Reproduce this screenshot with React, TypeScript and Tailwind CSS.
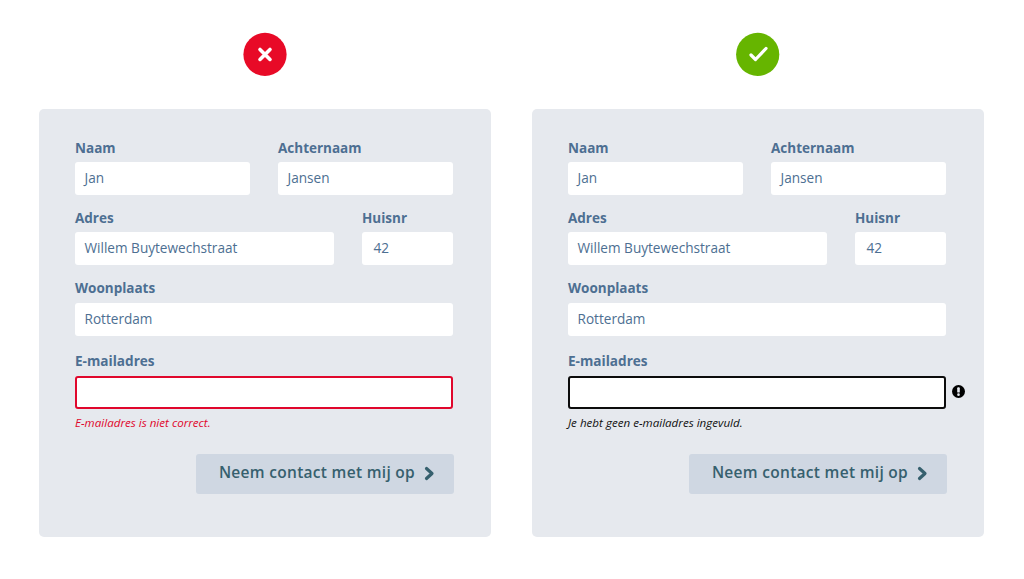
function Field({
  label,
  value,
  className,
  labelClass = "h-[23px]",
  inputClass = "px-[9.5px]",
}: {
  label: string;
  value: string;
  className: string;
  labelClass?: string;
  inputClass?: string;
}) {
  return (
    <label className={`flex flex-col ${className}`}>
      <span className={`text-[13.5px] leading-[19px] font-bold text-[#4d6f92] ${labelClass}`}>{label}</span>
      <span className={`flex h-[33px] items-center rounded-[3px] bg-white text-[13.6px] text-[#4d6f92] ${inputClass}`}>
        {value}
      </span>
    </label>
  );
}

function Panel({ kind }: { kind: "error" | "ok" }) {
  const isError = kind === "error";
  return (
    <section className="flex w-[452px] flex-col items-center">
      {isError ? (
        <svg className="mt-[32px]" width="44" height="44" viewBox="0 0 44 44" fill="none">
          <circle cx="22" cy="22.4" r="21.6" fill="#e80a27" />
          <path d="M17 17.4 27 27.4M27 17.4 17 27.4" stroke="#fff" strokeWidth="3.6" strokeLinecap="round" />
        </svg>
      ) : (
        <svg className="mt-[32px]" width="44" height="44" viewBox="0 0 44 44" fill="none">
          <circle cx="21.7" cy="22.4" r="21.6" fill="#66b500" />
          <path d="M15 23 19.5 27.5 30 16.5" stroke="#fff" strokeWidth="3.2" strokeLinecap="round" strokeLinejoin="round" />
        </svg>
      )}

      <div className="mt-[33px] h-[428px] w-full rounded-[5px] bg-[#e6e9ee] pt-[30px] pr-[38px] pl-[36px]">
        <div className="flex gap-[28px]">
          <Field label="Naam" value="Jan" className="w-[175px]" />
          <Field label="Achternaam" value="Jansen" className="w-[175px]" />
        </div>
        <div className="mt-[14px] flex gap-[28px]">
          <Field label="Adres" value="Willem Buytewechstraat" className="w-[259px]" />
          <Field label="Huisnr" value="42" className="w-[91px]" inputClass="px-[11.5px]" />
        </div>
        <Field label="Woonplaats" value="Rotterdam" className="mt-[14px]" labelClass="h-[24px]" />

        <div className="relative mt-[15px]">
          <span className="block h-[25px] text-[13.6px] leading-[19px] font-bold text-[#4d6f92]">E-mailadres</span>
          <div
            className={`h-[33px] rounded-[3px] border-2 bg-white ${isError ? "border-[#e0072c]" : "border-[#0c0c0c]"}`}
          />
          {!isError && (
            <svg className="absolute top-[34px] right-[-19px]" width="13" height="13" viewBox="0 0 14 14">
              <circle cx="7" cy="7" r="7" fill="#000" />
              <rect x="5.6" y="2.4" width="2.8" height="5.8" rx="1" fill="#e6e9ee" />
              <circle cx="7" cy="10.4" r="1.4" fill="#e6e9ee" />
            </svg>
          )}
          <p
            className={`mt-[6px] text-[11.6px] leading-[16px] italic ${isError ? "text-[#e0072c]" : "text-[#111]"}`}
          >
            {isError ? "E-mailadres is niet correct." : "Je hebt geen e-mailadres ingevuld."}
          </p>
        </div>

        <div className="mt-[23px] mr-[-1px] flex justify-end">
          <button className="flex h-[40px] w-[258px] items-center justify-center gap-[9px] rounded-[3px] bg-[#cfd7e2] pb-[3px] pl-[4px] text-[15.5px] font-[650] tracking-[0.3px] text-[#36606e]">
            Neem contact met mij op
            <svg className="mt-[1px]" width="11" height="15" viewBox="0 0 11 15" fill="none" stroke="#36606e" strokeWidth="3.2" strokeLinecap="round" strokeLinejoin="round">
              <path d="M2.5 2.5 8 7.5 2.5 12.5" />
            </svg>
          </button>
        </div>
      </div>
    </section>
  );
}

export default function App() {
  return (
    <main className="flex h-[579px] w-[1024px] gap-[41px] bg-white pl-[39px] font-['Open_Sans',sans-serif]">
      <Panel kind="error" />
      <Panel kind="ok" />
    </main>
  );
}
